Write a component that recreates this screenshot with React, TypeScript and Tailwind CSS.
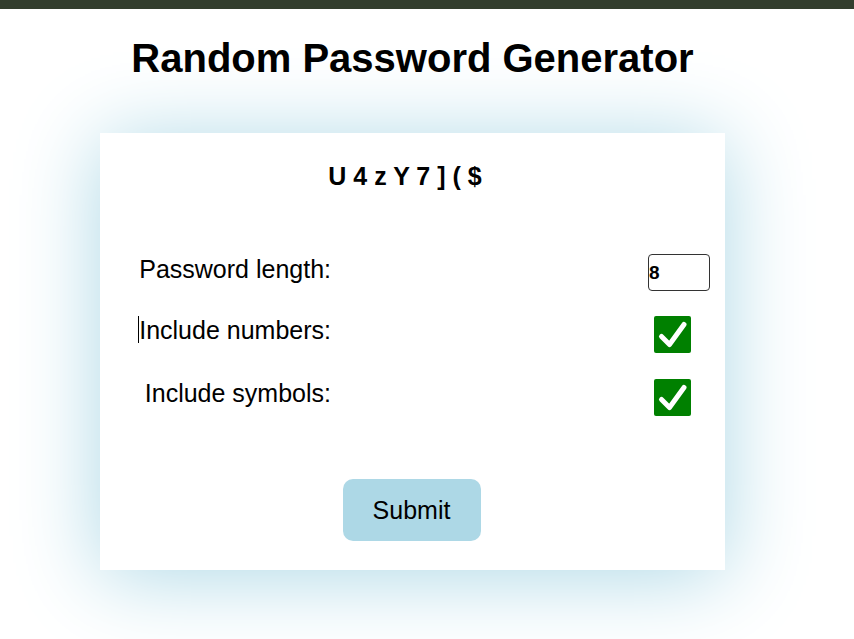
import React from "react";

function GreenCheck() {
  return (
    <svg width="37" height="37" viewBox="0 0 37 37" className="block">
      <rect x="0" y="0" width="37" height="37" rx="2" fill="#008000" />
      <path d="M7.5 20.5 L15.5 28.5 L30 8.5" fill="none" stroke="#ffffff" strokeWidth="5" strokeLinecap="round" strokeLinejoin="round" />
    </svg>
  );
}

export default function App() {
  return (
    <div className="min-h-[639px] w-[854px] bg-white font-['Liberation_Sans',Arial,sans-serif] text-black">
      <div className="h-[9px] bg-[#333e2e]" />
      <div className="ml-[100px] w-[625px]">
        <h1 className="mt-[26px] text-center text-[40px] font-bold leading-[46px]">Random Password Generator</h1>
        <div className="mt-[52px] h-[437px] bg-white pt-[29px] shadow-[0_6px_80px_#add8e6]">
          <div className="pr-[15px] text-center text-[25px] font-bold leading-[29px]">U 4 z Y 7 ] ( $</div>
          <div className="mt-[64px] flex h-[57px] items-start">
            <div className="w-[231px] text-right text-[25px] leading-[29px]">Password length:</div>
            <div className="ml-[317px] -mt-[1px]">
              <div className="flex h-[37px] w-[62px] items-center rounded-[4px] border border-[#333] text-[19px] font-bold leading-none">8</div>
            </div>
          </div>
          <div className="flex h-[68px] items-start">
            <div className="flex w-[231px] items-start justify-end text-[25px] leading-[29px]">
              <span className="mt-[4px] inline-block h-[27px] w-px bg-black" />
              <span className="mt-[4px]">Include numbers:</span>
            </div>
            <div className="ml-[323px] mt-[4px]">
              <GreenCheck />
            </div>
          </div>
          <div className="flex h-[99px] items-start">
            <div className="-mt-[1px] w-[231px] text-right text-[25px] leading-[29px]">Include symbols:</div>
            <div className="ml-[323px] -mt-[1px]">
              <GreenCheck />
            </div>
          </div>
          <div className="flex justify-center pr-[2px]">
            <button className="h-[62px] w-[138px] rounded-[10px] bg-[#add8e6] text-[25px] leading-none">Submit</button>
          </div>
        </div>
      </div>
    </div>
  );
}
